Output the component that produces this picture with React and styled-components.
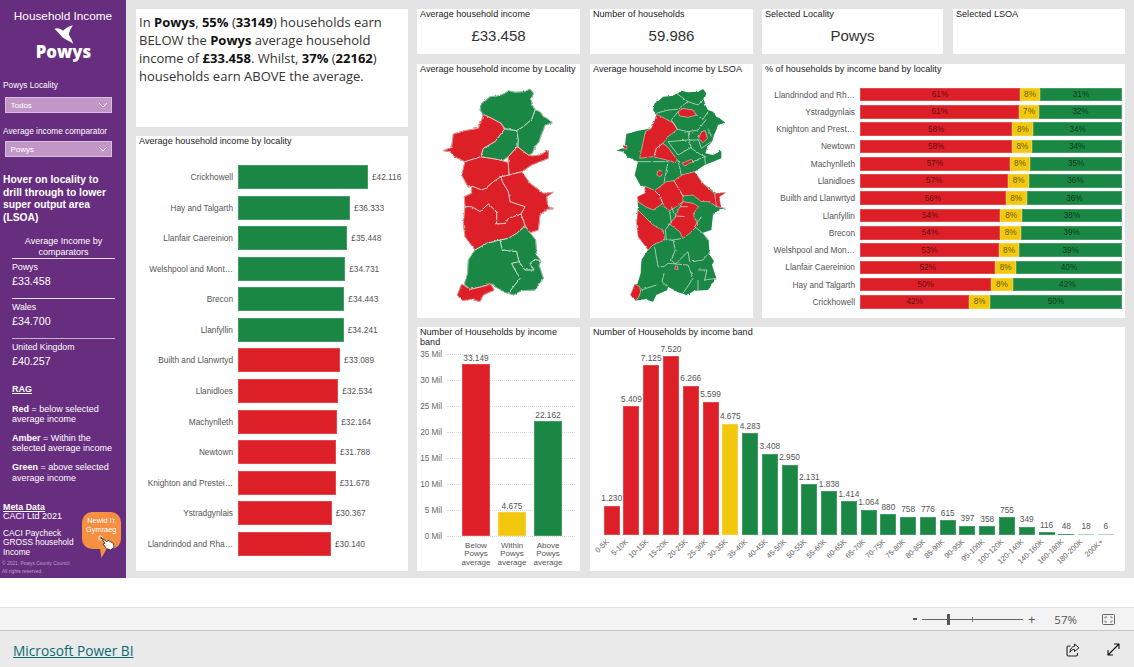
import React from "react";
import styled, { createGlobalStyle } from "styled-components";

const Global = createGlobalStyle`
  html, body { margin: 0; padding: 0; background: #fff; }
  body { font-family: "Liberation Sans", Arial, sans-serif; overflow: hidden; }
`;

const COLORS = { red: "#dd2027", amber: "#f2c80f", green: "#1a8745" };
const fmt = (v) => String(v).replace(/\B(?=(\d{3})+$)/g, ".");

const localityBars = [
  ["Crickhowell", 42116, "green"],
  ["Hay and Talgarth", 36333, "green"],
  ["Llanfair Caereinion", 35448, "green"],
  ["Welshpool and Mont…", 34731, "green"],
  ["Brecon", 34443, "green"],
  ["Llanfyllin", 34241, "green"],
  ["Builth and Llanwrtyd", 33089, "red"],
  ["Llanidloes", 32534, "red"],
  ["Machynlleth", 32164, "red"],
  ["Newtown", 31788, "red"],
  ["Knighton and Prestei…", 31678, "red"],
  ["Ystradgynlais", 30367, "red"],
  ["Llandrindod and Rha…", 30140, "red"],
];

// name, pct labels, red and amber width in px of the 262px bar
const stacked = [
  ["Llandrindod and Rh…", 61, 8, 31, 160, 20],
  ["Ystradgynlais", 61, 7, 32, 159.3, 19.4],
  ["Knighton and Prest…", 58, 8, 34, 152.3, 21],
  ["Newtown", 58, 8, 34, 152.3, 20],
  ["Machynlleth", 57, 8, 35, 149.7, 20.7],
  ["Llanidloes", 57, 8, 36, 148.3, 20.7],
  ["Builth and Llanwrtyd", 56, 8, 36, 145.7, 21],
  ["Llanfyllin", 54, 8, 38, 140.3, 21.7],
  ["Brecon", 54, 8, 39, 140, 21.3],
  ["Welshpool and Mon…", 53, 8, 39, 138.7, 20.7],
  ["Llanfair Caereinion", 52, 8, 40, 135.3, 20.7],
  ["Hay and Talgarth", 50, 8, 42, 131.3, 21.3],
  ["Crickhowell", 42, 8, 50, 109.3, 20.7],
];

const bands = [
  ["0-5K", 1230], ["5-10K", 5409], ["10-15K", 7125], ["15-20K", 7520], ["20-25K", 6266],
  ["25-30K", 5599], ["30-35K", 4675], ["35-40K", 4283], ["40-45K", 3408], ["45-50K", 2950],
  ["50-55K", 2131], ["55-60K", 1838], ["60-65K", 1414], ["65-70K", 1064], ["70-75K", 880],
  ["75-80K", 758], ["80-85K", 776], ["85-90K", 615], ["90-95K", 397], ["95-100K", 358],
  ["100-120K", 755], ["120-140K", 349], ["140-160K", 116], ["160-180K", 48], ["180-200K", 18],
  ["200K+", 6],
];
const bandTone = (i) => (i < 6 ? "red" : i === 6 ? "amber" : "green");

const Page = styled.div`
  width: 1134px;
  height: 667px;
  display: flex;
  flex-direction: column;
  background: #fff;
`;

const Canvas = styled.div`
  height: 578px;
  display: flex;
  background: #e4e4e4;
`;

/* sidebar */
const Sidebar = styled.aside`
  width: 126px;
  height: 578px;
  flex: none;
  background: #672d7e;
  color: #fff;
  padding-top: 9px;
  box-sizing: border-box;
  overflow: hidden;
`;

const SideTitle = styled.div`
  font-size: 11.8px;
  line-height: 14px;
  text-align: center;
`;

const Logo = styled.div`
  display: flex;
  flex-direction: column;
  align-items: center;
  margin-top: 2px;
  svg { display: block; margin-left: 1px; }
`;

const LogoWord = styled.div`
  font-family: "Open Sans", sans-serif;
  font-weight: 800;
  font-size: 16.8px;
  line-height: 15px;
  margin-left: 1px;
`;

const FilterLabel = styled.div`
  font-size: 8.3px;
  line-height: 10px;
  margin: ${(p) => p.$top}px 0 0 3px;
`;

const Select = styled.div`
  width: 107px;
  height: 16px;
  margin: ${(p) => p.$top}px 0 0 5px;
  box-sizing: border-box;
  background: #c297c8;
  border: 1px solid #d9bede;
  display: flex;
  align-items: center;
  justify-content: space-between;
  padding: 0 3px 0 4.5px;
  font-size: 8px;
`;

const Hover = styled.div`
  font-size: 10.3px;
  font-weight: 700;
  line-height: 12.6px;
  margin: 17px 0 0 3px;
`;

const CompTitle = styled.div`
  font-size: 9px;
  line-height: 11px;
  text-align: center;
  width: 103px;
  margin: 12px 0 0 12px;
`;

const Comp = styled.div`
  width: 103px;
  height: 40px;
  margin-left: 12px;
  box-sizing: border-box;
  border-top: 1px solid ${(p) => p.$line};
  padding-top: 2px;
`;

const CompName = styled.div`
  font-size: 8.8px;
  line-height: 12px;
`;

const CompValue = styled.div`
  font-size: 10.7px;
  line-height: 14px;
  margin-top: 0.5px;
`;

const Rag = styled.div`
  font-size: 9px;
  font-weight: 700;
  line-height: 12px;
  text-decoration: underline;
  margin: 5px 0 0 12px;
`;

const Legend = styled.p`
  font-size: 9px;
  line-height: 10.5px;
  margin: 8.3px 0 0 12px;
  width: 108px;
`;

const MetaRow = styled.div`
  display: flex;
  margin-top: 19px;
`;

const MetaText = styled.div`
  width: 79px;
  margin-left: 3px;
  flex: none;
  font-size: 9px;
  line-height: 9.5px;
  padding-top: 0.5px;
`;

const MetaHead = styled.div`
  font-weight: 700;
  font-size: 8.9px;
  text-decoration: underline;
`;

const MetaNote = styled.div`
  margin-top: 7.5px;
  font-size: 8.3px;
  line-height: 9.2px;
`;

const Bubble = styled.div`
  position: relative;
  width: 38.5px;
  height: 37px;
  margin: 10px 0 0 0;
  flex: none;
  background: #f58f42;
  border-radius: 10px;
  font-size: 7.4px;
  line-height: 9px;
  text-align: center;
  padding-top: 4px;
  box-sizing: border-box;
  &::after {
    content: "";
    position: absolute;
    left: 18px;
    top: 36px;
    width: 7px;
    height: 10px;
    background: #f58f42;
    clip-path: polygon(0 0, 100% 0, 20% 100%);
  }
  svg { position: absolute; left: 16px; top: 22px; }
`;

const Copyright = styled.div`
  font-size: 4.9px;
  line-height: 8px;
  color: #b8a4c2;
  margin: 3px 0 0 2px;
`;

/* report */
const Report = styled.main`
  display: flex;
  padding: 9px 0 0 10px;
  gap: 9px;
`;

const LeftCol = styled.div`
  width: 272px;
  height: 562px;
  display: flex;
  flex-direction: column;
  gap: 9px;
`;

const RightGrid = styled.div`
  display: grid;
  grid-template-columns: 163px 10px 163px 9px 181px 10px 172px;
  grid-template-rows: 45px 10px 254px 9px 244px;
  grid-template-areas:
    "kpi1 . kpi2 . kpi3 . kpi4"
    ". . . . . . ."
    "map1 . map2 . pct pct pct"
    ". . . . . . ."
    "rag . band band band band band";
`;

const Card = styled.section`
  background: #fff;
  grid-area: ${(p) => p.$area || "auto"};
  overflow: hidden;
  min-width: 0;
  ${(p) => p.$fill && "flex: 1;"}
`;

const Narrative = styled(Card)`
  height: 118px;
  flex: none;
  box-sizing: border-box;
  padding: 4px 3px 0 3px;
  font-family: "Open Sans", sans-serif;
  font-size: 13px;
  line-height: 18px;
  color: #333;
  b { color: #111; font-weight: 700; }
`;

const CardTitle = styled.div`
  font-size: 9.1px;
  line-height: 10px;
  color: #222;
  padding: 0 2px 0 3px;
`;

const Kpi = styled.div`
  font-size: 15px;
  line-height: 18px;
  color: #333;
  text-align: center;
  margin-top: 8px;
`;

const LocalityChart = styled.div`
  display: flex;
  flex-direction: column;
  gap: 6.58px;
  margin-top: 19px;
`;

const HRow = styled.div`
  display: flex;
  align-items: center;
  height: 24px;
`;

const RowLabel = styled.div`
  width: ${(p) => p.$w}px;
  flex: none;
  text-align: right;
  font-size: 8.3px;
  color: #555;
  white-space: nowrap;
  margin-right: 5px;
`;

const Bar = styled.div`
  background: ${(p) => COLORS[p.$tone]};
  box-shadow: inset 0 0 0 1px rgba(255, 255, 255, 0.18);
`;

const HBar = styled(Bar)`
  height: 24px;
`;

const HValue = styled.div`
  font-size: 8.3px;
  color: #555;
  margin-left: 4px;
`;

const MapSvg = styled.svg`
  display: block;
  width: 163px;
  height: 244px;
  filter: blur(0.2px);
`;

const StackChart = styled.div`
  display: flex;
  flex-direction: column;
  gap: 3.6px;
  margin-top: 13.7px;
`;

const StackRow = styled.div`
  display: flex;
  align-items: center;
  height: 13.7px;
`;

const StackBar = styled.div`
  width: 262px;
  display: flex;
  height: 100%;
`;

const Seg = styled(Bar)`
  height: 100%;
  display: flex;
  align-items: center;
  justify-content: center;
  font-size: 8.2px;
  color: rgba(0, 0, 0, 0.62);
  flex: ${(p) => (p.$grow ? "1" : "none")};
`;

const RagPlot = styled.div`
  display: grid;
  margin-top: 2px;
  > * { grid-area: 1 / 1; }
`;

const Axis = styled.div`
  display: flex;
  flex-direction: column;
  gap: 16px;
`;

const AxisRow = styled.div`
  display: flex;
  align-items: center;
  height: 10px;
`;

const AxisLabel = styled.div`
  width: 25px;
  text-align: right;
  font-size: 8.2px;
  color: #666;
  flex: none;
`;

const AxisLine = styled.div`
  width: 128px;
  margin-left: 5px;
  border-top: 1px dotted #d8d8d8;
`;

const RagBars = styled.div`
  display: flex;
  align-items: flex-end;
  padding: 0 0 5px 45px;
  gap: 8px;
`;

const Column = styled.div`
  display: flex;
  flex-direction: column;
  align-items: center;
  width: ${(p) => p.$w}px;
  flex: none;
`;

const ColValue = styled.div`
  font-size: 8.3px;
  line-height: 9px;
  color: #555;
  margin-bottom: ${(p) => p.$gap}px;
  white-space: nowrap;
`;

const ColBar = styled(Bar)`
  width: ${(p) => p.$w}px;
`;

const RagCats = styled.div`
  display: flex;
  padding-left: 41px;
  margin-top: 0.5px;
`;

const RagCat = styled.div`
  width: 36px;
  font-size: 8px;
  line-height: 8.8px;
  text-align: center;
  color: #555;
`;

const BandPlot = styled.div`
  display: flex;
  align-items: flex-end;
  height: 198px;
  margin-left: 11.8px;
`;

const BandSlot = styled.div`
  width: 19.77px;
  flex: none;
  display: flex;
  flex-direction: column;
  align-items: center;
`;

const BandLabels = styled.div`
  display: flex;
  margin-left: 11.8px;
`;

const BandTick = styled.div`
  width: 19.77px;
  flex: none;
  display: flex;
  justify-content: flex-end;
  padding-right: 14px;
  box-sizing: border-box;
  height: 30px;
`;

const BandText = styled.div`
  font-size: 7.5px;
  line-height: 9px;
  height: 9px;
  margin-top: 1px;
  color: #666;
  white-space: nowrap;
  transform-origin: 100% 50%;
  transform: rotate(-43deg);
`;

/* power bi chrome */
const Toolbar = styled.div`
  margin-top: 29px;
  height: 24px;
  box-sizing: border-box;
  border-top: 1px solid #e1e1e1;
  border-bottom: 1px solid #c8c8c8;
  background: #f3f3f3;
  display: flex;
  align-items: center;
  justify-content: flex-end;
  padding-right: 19px;
  color: #555;
`;

const Minus = styled.div`
  width: 4px;
  height: 2px;
  background: #555;
`;

const Slider = styled.div`
  position: relative;
  width: 101px;
  height: 1px;
  background: #666;
  margin: 0 5px 0 5px;
`;

const Thumb = styled.div`
  position: absolute;
  left: 25px;
  top: -5px;
  width: 3px;
  height: 11px;
  background: #555;
`;

const Tick = styled.div`
  position: absolute;
  left: 50px;
  top: -2px;
  width: 1px;
  height: 5px;
  background: #777;
`;

const Plus = styled.div`
  font-family: "Open Sans", sans-serif;
  font-size: 13px;
  line-height: 14px;
`;

const Percent = styled.div`
  font-family: "Open Sans", sans-serif;
  font-size: 11.5px;
  margin: 0 25px 0 19px;
`;

const Footer = styled.div`
  flex: 1;
  background: #eaeaea;
  display: flex;
  align-items: center;
  justify-content: space-between;
  padding: 3px 13px 0 13px;
`;

const PowerBiLink = styled.a`
  font-family: "Open Sans", sans-serif;
  font-size: 13.7px;
  color: #0d6a74;
  text-decoration: underline;
`;

const FooterIcons = styled.div`
  display: flex;
  align-items: center;
  gap: 27px;
  margin: -2px 1px 0 0;
  svg { display: block; }
`;

// traced from the report at 3x, one unit is a third of a pixel
const localityRegions = [
  ["green", "195,150 200,130 212,122 225,110 250,108 270,100 280,92 300,97 330,95 345,87 355,100 348,120 352,135 360,150 350,178 325,200 305,212 270,205 258,190 230,175 205,163"],
  ["green", "360,150 375,155 385,170 395,175 412,188 390,195 385,210 378,225 372,245 358,262 352,280 340,285 310,262 310,240 305,212 325,200 350,178"],
  ["green", "268,208 305,212 310,240 305,262 280,290 262,302 240,297 197,290 205,265 240,245"],
  ["red", "205,163 230,175 258,190 268,208 240,245 205,265 197,290 150,305 118,290 105,275 85,272 110,262 115,222 150,212 190,205 200,180"],
  ["red", "305,262 310,262 340,285 352,288 375,285 400,272 400,295 375,305 350,315 320,335 282,345 280,310 280,290"],
  ["red", "197,290 240,297 262,302 280,310 282,345 258,350 235,365 212,385 200,390 170,378 160,382 140,345 150,305"],
  ["red", "258,350 282,345 320,335 345,370 365,385 385,400 415,397 395,410 398,440 415,445 395,448 375,465 370,510 345,518 330,495 318,462 330,440 285,425 280,395 262,365"],
  ["red", "170,378 200,390 212,385 235,365 258,350 262,365 280,395 285,425 330,440 318,462 280,475 272,490 245,492 245,455 220,432 195,455 170,440 150,440 148,410 170,400"],
  ["red", "150,440 170,440 195,455 220,432 245,455 245,492 272,490 280,475 318,462 330,495 305,520 280,535 255,540 215,550 180,570 150,530 145,490"],
  ["green", "180,570 215,550 255,540 262,570 305,575 312,605 290,610 300,630 315,655 280,700 270,697 240,680 232,672 200,680 165,688 148,672 158,640 160,600"],
  ["green", "255,540 280,535 305,520 330,500 345,518 362,540 365,585 378,603 360,598 345,610 357,630 330,630 312,605 305,575 262,570"],
  ["green", "290,610 312,605 330,630 357,630 345,610 360,598 378,603 372,615 385,655 360,690 320,692 295,705 280,700 315,655 300,630"],
  ["red", "140,672 165,688 200,680 225,670 238,690 205,705 195,725 170,718 140,722 127,705"],
];

const outline =
  "195,150 200,130 212,122 225,110 250,108 270,100 280,92 300,97 330,95 345,87 355,100 348,120 352,135 360,150 375,155 385,170 395,175 412,188 390,195 385,210 378,225 372,245 358,262 352,280 375,285 400,272 400,295 375,305 350,315 320,335 345,370 365,385 385,400 415,397 395,410 398,440 415,445 395,448 375,465 370,510 345,518 362,540 365,585 378,603 372,615 385,655 360,690 320,692 295,705 280,700 270,697 240,680 238,690 205,705 195,725 170,718 140,722 127,705 140,672 148,672 158,640 160,600 180,570 150,530 145,490 150,440 148,410 170,400 170,378 160,382 140,345 150,305 118,290 105,275 85,272 110,262 115,222 150,212 190,205 200,180 205,163";

const lsoaRed = [
  "270,155 285,145 315,150 325,165 300,172 275,168",
  "205,163 230,175 258,190 268,208 240,230 225,250 205,265 197,290 155,295 172,215 190,205 200,180",
  "225,250 240,262 268,300 262,308 235,300 197,290 205,265",
  "340,215 352,212 358,235 345,248 332,235",
  "105,258 117,256 115,268 104,265",
  "282,310 310,298 315,303 290,318",
  "208,335 218,330 222,345 215,350 207,345",
  "258,362 282,345 320,335 345,370 378,400 415,397 395,410 398,440 415,445 385,440 365,425 340,425 315,405 285,408",
  "170,378 200,392 218,410 222,432 195,450 172,440 150,425 148,410 172,398",
  "200,392 235,365 258,362 285,408 285,425 265,440 245,452 228,440 218,410",
  "285,425 315,430 332,440 315,462 330,495 305,520 285,535 275,515 245,492 262,470 270,450",
  "150,450 170,470 195,495 225,510 230,540 195,555 180,570 150,530 145,490",
  "140,672 155,680 158,695 150,715 140,722 127,705",
  "262,618 268,618 270,628 260,628",
];

const lsoaLines = [
  "265,100 300,125 330,135 345,120",
  "205,160 240,150 268,148 300,125",
  "270,155 250,180 268,208 300,215 330,210 355,178",
  "325,165 345,178 360,155",
  "240,245 300,240 330,240",
  "300,215 305,245 310,265 340,285 355,290",
  "240,245 270,285 310,262",
  "330,235 340,265 370,245",
  "360,205 370,230",
  "150,305 240,305 228,368",
  "270,300 280,345",
  "315,305 350,290 352,312",
  "380,400 385,440",
  "200,560 210,620 228,620 240,610 300,615 315,655 285,700",
  "255,540 262,570 250,600 262,612 300,575 305,605",
  "228,640 222,665 238,680",
  "312,605 345,600 362,580",
  "330,630 357,630 350,660 385,655",
  "330,660 330,690",
  "160,690 205,675",
  "245,492 232,510 235,540 255,540 285,535",
  "320,500 345,520 360,540",
  "245,455 250,490",
  "250,440 262,470",
  "340,470 320,500",
  "275,440 300,440",
  "265,468 290,470",
];

// wobbles the straight traced edges so they look like real boundaries
const Rough = ({ id }) => (
  <filter id={id} x="-5%" y="-5%" width="110%" height="110%" colorInterpolationFilters="sRGB">
    <feTurbulence type="fractalNoise" baseFrequency="0.09" numOctaves="2" seed="4" />
    <feDisplacementMap in="SourceGraphic" scale="7" xChannelSelector="R" yChannelSelector="G" />
  </filter>
);

function LocalityMap() {
  return (
    <MapSvg viewBox="6 42 489 732" aria-label="Locality map">
      <Rough id="roughA" />
      <g filter="url(#roughA)">
        {localityRegions.map(([tone, points], i) => (
          <polygon key={i} points={points} fill={COLORS[tone]} stroke={COLORS[tone]} strokeWidth="3" strokeLinejoin="round" />
        ))}
        {localityRegions.map(([, points], i) => (
          <polygon key={i} points={points} fill="none" stroke="#dfe7e1" strokeWidth="1.8" strokeLinejoin="round" />
        ))}
      </g>
    </MapSvg>
  );
}

function LsoaMap() {
  return (
    <MapSvg viewBox="6 42 489 732" aria-label="LSOA map">
      <Rough id="roughB" />
      <g filter="url(#roughB)">
        <polygon points={outline} fill={COLORS.green} />
        {lsoaRed.map((points, i) => (
          <polygon key={i} points={points} fill={COLORS.red} />
        ))}
        {lsoaLines.map((points, i) => (
          <polyline key={i} points={points} fill="none" stroke="#e6ece8" strokeWidth="2" strokeLinejoin="round" />
        ))}
        {lsoaRed.map((points, i) => (
          <polygon key={i} points={points} fill="none" stroke="#f3e6e6" strokeWidth="1.6" />
        ))}
      </g>
    </MapSvg>
  );
}

const Chevron = () => (
  <svg width="10" height="6" viewBox="0 0 10 6">
    <polyline points="1,1 5,5 9,1" fill="none" stroke="#fff" strokeWidth="0.9" />
  </svg>
);

const Bird = () => (
  <svg width="20" height="19" viewBox="0 0 60 60">
    <path d="M0 12C8 8 18 10 27 18C32 12 44 5 58 1C52 12 46 22 45 30C50 38 56 48 59 59C47 50 33 46 24 38C16 30 8 20 0 12Z" fill="#fff" />
  </svg>
);

const Hand = () => (
  <svg width="18" height="17" viewBox="0 0 18 17">
    <circle cx="2.5" cy="4" r="2" fill="none" stroke="#fff" strokeWidth="0.8" />
    <path d="M3 3.5L8.5 7.5L10.5 6.5L15.5 9.5L16 13.5L12.5 16L8.5 14.5L5 10L7 9.5Z" fill="#fff" stroke="#222" strokeWidth="0.8" strokeLinejoin="round" />
  </svg>
);

const FitIcon = () => (
  <svg width="13" height="11" viewBox="0 0 13 11">
    <rect x="0.5" y="0.5" width="12" height="10" rx="1" fill="none" stroke="#666" />
    <path d="M3 4.5V3H5M8 3H10V4.5M10 6.5V8H8M5 8H3V6.5" fill="none" stroke="#666" strokeWidth="0.8" />
  </svg>
);

const ShareIcon = () => (
  <svg width="14" height="14" viewBox="0 0 14 14">
    <path d="M4.5 3H2.5C1.6 3 1 3.6 1 4.5V11.5C1 12.4 1.6 13 2.5 13H10C10.9 13 11.5 12.4 11.5 11.5V10" fill="none" stroke="#222" strokeWidth="1.1" />
    <path d="M8.5 1L13 4.8L8.5 8.5V6.4C6.5 6.4 4.8 7.3 4 9.3C4 5.8 6 3.6 8.5 3.3Z" fill="none" stroke="#222" strokeWidth="1" strokeLinejoin="round" />
  </svg>
);

const ExpandIcon = () => (
  <svg width="13" height="13" viewBox="0 0 13 13">
    <path d="M1 12L12 1M7 1H12V6M1 7V12H6" fill="none" stroke="#111" strokeWidth="1.1" />
  </svg>
);

export default function App() {
  return (
    <Page>
      <Global />
      <Canvas>
        <Sidebar>
          <SideTitle>Household Income</SideTitle>
          <Logo>
            <Bird />
            <LogoWord>Powys</LogoWord>
          </Logo>
          <FilterLabel $top={21}>Powys Locality</FilterLabel>
          <Select $top={7}>
            Todos
            <Chevron />
          </Select>
          <FilterLabel $top={13}>Average income comparator</FilterLabel>
          <Select $top={5}>
            Powys
            <Chevron />
          </Select>
          <Hover>
            Hover on locality to
            <br />
            drill through to lower
            <br />
            super output area
            <br />
            (LSOA)
          </Hover>
          <CompTitle>
            Average Income by
            <br />
            comparators
          </CompTitle>
          <Comp $line="#e6dcea">
            <CompName>Powys</CompName>
            <CompValue>£33.458</CompValue>
          </Comp>
          <Comp $line="#e6dcea">
            <CompName>Wales</CompName>
            <CompValue>£34.700</CompValue>
          </Comp>
          <Comp $line="#c4b3cc">
            <CompName>United Kingdom</CompName>
            <CompValue>£40.257</CompValue>
          </Comp>
          <Rag>RAG</Rag>
          <Legend>
            <b>Red</b> = below selected average income
          </Legend>
          <Legend>
            <b>Amber</b> = Within the selected average income
          </Legend>
          <Legend>
            <b>Green</b> = above selected average income
          </Legend>
          <MetaRow>
            <MetaText>
              <MetaHead>Meta Data</MetaHead>
              CACI Ltd 2021
              <MetaNote>
                CACI Paycheck
                <br />
                GROSS household
                <br />
                Income
              </MetaNote>
            </MetaText>
            <Bubble>
              Newid i'r
              <br />
              Gymraeg
              <Hand />
            </Bubble>
          </MetaRow>
          <Copyright>
            © 2021. Powys County Council.
            <br />
            All rights reserved.
          </Copyright>
        </Sidebar>

        <Report>
          <LeftCol>
            <Narrative>
              In <b>Powys</b>, <b>55%</b> (<b>33149</b>) households earn BELOW the <b>Powys</b> average household income of <b>£33.458</b>. Whilst, <b>37%</b> (<b>22162</b>) households earn ABOVE the average.
            </Narrative>
            <Card $fill>
              <CardTitle>Average household income by locality</CardTitle>
              <LocalityChart>
                {localityBars.map(([name, value, tone]) => (
                  <HRow key={name}>
                    <RowLabel $w={97}>{name}</RowLabel>
                    <HBar $tone={tone} style={{ width: value * 0.003085 }} />
                    <HValue>£{fmt(value)}</HValue>
                  </HRow>
                ))}
              </LocalityChart>
            </Card>
          </LeftCol>

          <RightGrid>
            <Card $area="kpi1">
              <CardTitle>Average household income</CardTitle>
              <Kpi>£33.458</Kpi>
            </Card>
            <Card $area="kpi2">
              <CardTitle>Number of households</CardTitle>
              <Kpi>59.986</Kpi>
            </Card>
            <Card $area="kpi3">
              <CardTitle>Selected Locality</CardTitle>
              <Kpi>Powys</Kpi>
            </Card>
            <Card $area="kpi4">
              <CardTitle>Selected LSOA</CardTitle>
            </Card>

            <Card $area="map1">
              <CardTitle>Average household income by Locality</CardTitle>
              <LocalityMap />
            </Card>
            <Card $area="map2">
              <CardTitle>Average household income by LSOA</CardTitle>
              <LsoaMap />
            </Card>
            <Card $area="pct">
              <CardTitle>% of households by income band by locality</CardTitle>
              <StackChart>
                {stacked.map(([name, a, b, c, redPx, amberPx]) => (
                  <StackRow key={name}>
                    <RowLabel $w={93}>{name}</RowLabel>
                    <StackBar>
                      <Seg $tone="red" style={{ width: redPx }}>{a}%</Seg>
                      <Seg $tone="amber" style={{ width: amberPx }}>{b}%</Seg>
                      <Seg $tone="green" $grow>{c}%</Seg>
                    </StackBar>
                  </StackRow>
                ))}
              </StackChart>
            </Card>

            <Card $area="rag">
              <CardTitle>Number of Households by income band</CardTitle>
              <RagPlot>
                <Axis>
                  {[35, 30, 25, 20, 15, 10, 5, 0].map((m) => (
                    <AxisRow key={m}>
                      <AxisLabel>{m} Mil</AxisLabel>
                      <AxisLine />
                    </AxisRow>
                  ))}
                </Axis>
                <RagBars>
                  {[[33149, "red"], [4675, "amber"], [22162, "green"]].map(([value, tone]) => (
                    <Column key={tone} $w={28}>
                      <ColValue $gap={1}>{fmt(value)}</ColValue>
                      <ColBar $w={28} $tone={tone} style={{ height: value * 0.00519 }} />
                    </Column>
                  ))}
                </RagBars>
              </RagPlot>
              <RagCats>
                <RagCat>Below Powys average</RagCat>
                <RagCat>Within Powys average</RagCat>
                <RagCat>Above Powys average</RagCat>
              </RagCats>
            </Card>

            <Card $area="band">
              <CardTitle>Number of Households by income band</CardTitle>
              <BandPlot>
                {bands.map(([name, value], i) => (
                  <BandSlot key={name}>
                    <ColValue $gap={2.5}>{fmt(value)}</ColValue>
                    <ColBar $w={16} $tone={bandTone(i)} style={{ height: Math.max(value * 0.0238, 1.5), opacity: value < 20 ? 0.4 : 1 }} />
                  </BandSlot>
                ))}
              </BandPlot>
              <BandLabels>
                {bands.map(([name]) => (
                  <BandTick key={name}>
                    <BandText>{name}</BandText>
                  </BandTick>
                ))}
              </BandLabels>
            </Card>
          </RightGrid>
        </Report>
      </Canvas>

      <Toolbar>
        <Minus />
        <Slider>
          <Tick />
          <Thumb />
        </Slider>
        <Plus>+</Plus>
        <Percent>57%</Percent>
        <FitIcon />
      </Toolbar>
      <Footer>
        <PowerBiLink href="#">Microsoft Power BI</PowerBiLink>
        <FooterIcons>
          <ShareIcon />
          <ExpandIcon />
        </FooterIcons>
      </Footer>
    </Page>
  );
}
